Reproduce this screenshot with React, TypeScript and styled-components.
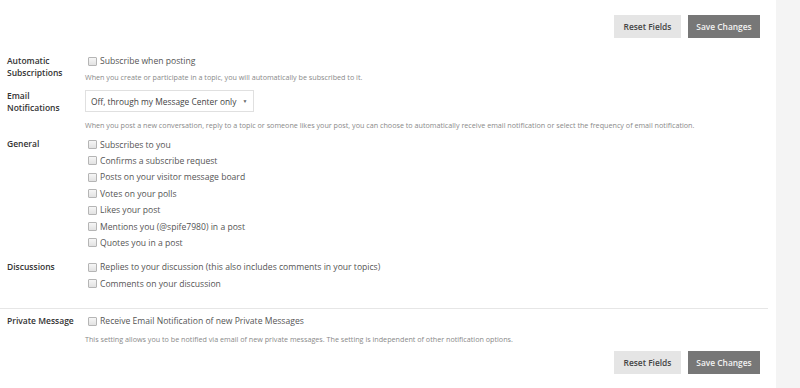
import styled, { createGlobalStyle } from 'styled-components';

const GlobalStyle = createGlobalStyle`
  html, body {
    margin: 0;
    padding: 0;
    background: #fff;
    font-family: 'Open Sans', 'Liberation Sans', sans-serif;
  }
`;

const Page = styled.div`
  display: flex;
  width: 800px;
  height: 388px;
  overflow: hidden;
`;

const Main = styled.main`
  flex: 0 0 776px;
  display: flex;
  flex-direction: column;
`;

const Sidebar = styled.aside`
  flex: 1;
  background: #f4f4f4;
`;

const ButtonBar = styled.div<{ $top: number }>`
  display: flex;
  justify-content: flex-end;
  gap: 7px;
  padding-right: 16px;
  margin-top: ${(p) => p.$top}px;
`;

const Button = styled.button<{ $primary?: boolean }>`
  width: ${(p) => (p.$primary ? 72 : 67)}px;
  height: 23px;
  padding: 0;
  border: none;
  font-family: inherit;
  font-size: 8.4px;
  font-weight: 600;
  background: ${(p) => (p.$primary ? '#777' : '#e5e5e5')};
  color: ${(p) => (p.$primary ? '#f2f2f2' : '#444')};
`;

const Row = styled.section<{ $top: number }>`
  display: grid;
  grid-template-columns: 78px 1fr;
  padding-left: 7px;
  margin-top: ${(p) => p.$top}px;
`;

const Label = styled.div<{ $pad?: number }>`
  font-size: 8.5px;
  font-weight: 600;
  line-height: 12px;
  color: #333;
  padding-top: ${(p) => p.$pad ?? 2}px;
`;

const Options = styled.div`
  display: flex;
  flex-direction: column;
`;

const Option = styled.label`
  display: flex;
  align-items: center;
  gap: 3px;
  height: 16.4px;
  padding-left: 3px;
  font-size: 8.6px;
  color: #555;
`;

const Box = styled.span`
  width: 7px;
  height: 7px;
  border: 1px solid #b5b5b5;
  border-radius: 1px;
  background: linear-gradient(#f6f6f6, #e2e2e2);
`;

const Help = styled.p<{ $top?: number }>`
  margin: ${(p) => p.$top ?? 5}px 0 0;
  font-size: 7.2px;
  line-height: 10px;
  color: #8a8a8a;
`;

const Select = styled.div`
  display: flex;
  align-items: center;
  gap: 6px;
  box-sizing: border-box;
  width: 169px;
  height: 22px;
  padding: 0 5px;
  border: 1px solid #e0e0e0;
  font-size: 8.4px;
  white-space: nowrap;
  color: #444;
`;

const Caret = styled.span`
  font-size: 5px;
  color: #666;
`;

const Divider = styled.hr`
  width: 768px;
  margin: 16px 0 0;
  border: none;
  border-top: 1px solid #e6e6e6;
`;

const CheckOption = ({ text }: { text: string }) => (
  <Option>
    <Box />
    {text}
  </Option>
);

const general = [
  'Subscribes to you',
  'Confirms a subscribe request',
  'Posts on your visitor message board',
  'Votes on your polls',
  'Likes your post',
  'Mentions you (@spife7980) in a post',
  'Quotes you in a post',
];

const Actions = ({ top }: { top: number }) => (
  <ButtonBar $top={top}>
    <Button>Reset Fields</Button>
    <Button $primary>Save Changes</Button>
  </ButtonBar>
);

export default function App() {
  return (
    <Page>
      <GlobalStyle />
      <Main>
        <Actions top={15} />

        <Row $top={15}>
          <Label $pad={2}>
            Automatic
            <br />
            Subscriptions
          </Label>
          <Options>
            <CheckOption text="Subscribe when posting" />
            <Help $top={3}>When you create or participate in a topic, you will automatically be subscribed to it.</Help>
          </Options>
        </Row>

        <Row $top={8}>
          <Label $pad={0}>
            Email
            <br />
            Notifications
          </Label>
          <Options>
            <Select>
              Off, through my Message Center only
              <Caret>▼</Caret>
            </Select>
            <Help $top={8}>
              When you post a new conversation, reply to a topic or someone likes your post, you can choose to
              automatically receive email notification or select the frequency of email notification.
            </Help>
          </Options>
        </Row>

        <Row $top={6}>
          <Label>General</Label>
          <Options>
            {general.map((g) => (
              <CheckOption key={g} text={g} />
            ))}
          </Options>
        </Row>

        <Row $top={8}>
          <Label>Discussions</Label>
          <Options>
            <CheckOption text="Replies to your discussion (this also includes comments in your topics)" />
            <CheckOption text="Comments on your discussion" />
          </Options>
        </Row>

        <Divider />

        <Row $top={4}>
          <Label>Private Message</Label>
          <Options>
            <CheckOption text="Receive Email Notification of new Private Messages" />
            <Help>
              This setting allows you to be notified via email of new private messages. The setting is independent of
              other notification options.
            </Help>
          </Options>
        </Row>

        <Actions top={7} />
      </Main>
      <Sidebar />
    </Page>
  );
}
